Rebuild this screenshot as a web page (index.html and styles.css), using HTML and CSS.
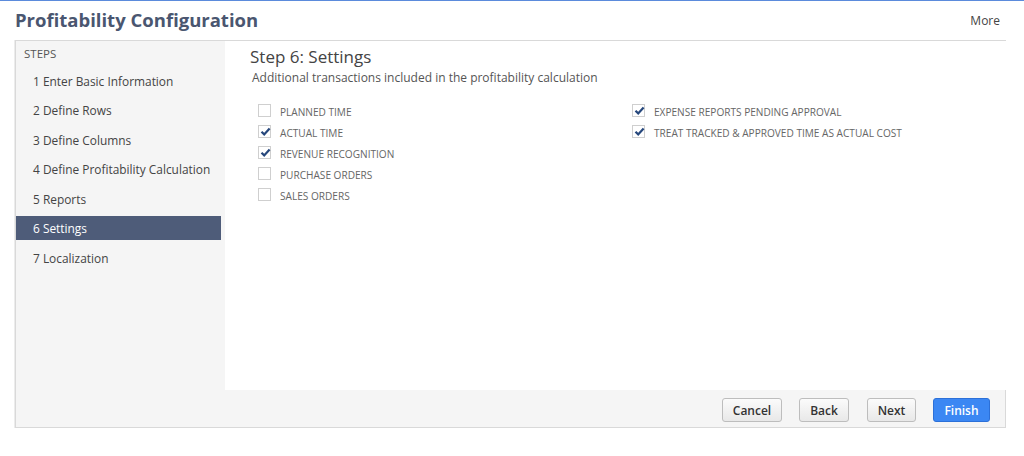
FILE: index.html
```html
<!DOCTYPE html>
<html lang="en">
<head>
  <meta charset="UTF-8" />
  <meta name="viewport" content="width=device-width, initial-scale=1.0" />
  <title>Profitability Configuration</title>
  <link rel="stylesheet" href="styles.css">
</head>
<body>
  <header class="page-header">
    <h1 class="page-title">Profitability Configuration</h1>
    <a href="#" class="more-link">More</a>
  </header>

  <div class="wizard">
    <div class="wizard-body">
      <nav class="steps">
        <div class="steps-label">STEPS</div>
        <a href="#" class="step">1 Enter Basic Information</a>
        <a href="#" class="step">2 Define Rows</a>
        <a href="#" class="step">3 Define Columns</a>
        <a href="#" class="step">4 Define Profitability Calculation</a>
        <a href="#" class="step">5 Reports</a>
        <a href="#" class="step active">6 Settings</a>
        <a href="#" class="step">7 Localization</a>
      </nav>

      <section class="content">
        <h2 class="content-title">Step 6: Settings</h2>
        <p class="content-sub">Additional transactions included in the profitability calculation</p>

        <div class="options">
          <div class="option-col">
            <label class="option"><span class="box"></span>PLANNED TIME</label>
            <label class="option"><span class="box checked"><svg viewBox="0 0 13 13"><path d="M2.5 6.8 L5.2 9.4 L10.6 3.4" /></svg></span>ACTUAL TIME</label>
            <label class="option"><span class="box checked"><svg viewBox="0 0 13 13"><path d="M2.5 6.8 L5.2 9.4 L10.6 3.4" /></svg></span>REVENUE RECOGNITION</label>
            <label class="option"><span class="box"></span>PURCHASE ORDERS</label>
            <label class="option"><span class="box"></span>SALES ORDERS</label>
          </div>
          <div class="option-col">
            <label class="option"><span class="box checked"><svg viewBox="0 0 13 13"><path d="M2.5 6.8 L5.2 9.4 L10.6 3.4" /></svg></span>EXPENSE REPORTS PENDING APPROVAL</label>
            <label class="option"><span class="box checked"><svg viewBox="0 0 13 13"><path d="M2.5 6.8 L5.2 9.4 L10.6 3.4" /></svg></span>TREAT TRACKED &amp; APPROVED TIME AS ACTUAL COST</label>
          </div>
        </div>
      </section>
    </div>

    <footer class="wizard-footer">
      <button class="btn btn-cancel">Cancel</button>
      <button class="btn btn-back">Back</button>
      <button class="btn btn-next">Next</button>
      <button class="btn btn-primary">Finish</button>
    </footer>
  </div>
</body>
</html>
```

FILE: styles.css
```css
body {
  font-family: "Open Sans", "Liberation Sans", sans-serif;
  margin: 0;
  padding: 0;
  background-color: #fff;
  border-top: 1px solid #5b8bdc;
  color: #444;
}
.page-header {
  display: flex;
  justify-content: space-between;
  align-items: center;
  height: 39px;
  padding: 0 24px 0 15px;
}
.page-title {
  margin: 0;
  font-size: 18.5px;
  font-weight: 700;
  color: #4a5670;
  margin-top: -2px;
}
.more-link {
  color: #444;
  font-size: 12px;
  text-decoration: none;
}
.wizard {
  margin-left: 15px;
  width: 989px;
  border: 1px solid #d9d9d9;
  box-shadow: 0 1px 0 #e4e4e4, -1px 0 0 #ececec;
  background-color: #f5f5f5;
}
.wizard-body {
  display: flex;
  height: 349px;
}
.steps {
  width: 209px;
  flex-shrink: 0;
  display: flex;
  flex-direction: column;
  padding-top: 4.5px;
}
.steps-label {
  font-size: 11.5px;
  line-height: 16px;
  color: #555;
  padding-left: 8px;
  margin-bottom: 7px;
}
.step {
  display: block;
  width: 188px;
  height: 24px;
  line-height: 24px;
  padding-left: 17px;
  margin-bottom: 5.6px;
  font-size: 11.9px;
  color: #444;
  text-decoration: none;
  white-space: nowrap;
}
.step.active {
  background-color: #4e5c79;
  color: #fff;
}
.content {
  flex: 1;
  background-color: #fff;
  padding: 5px 0 0 25px;
}
.content-title {
  margin: 0;
  font-size: 17px;
  font-weight: 400;
  line-height: 22px;
  color: #444;
}
.content-sub {
  margin: 1px 0 0 2px;
  font-size: 12px;
  line-height: 18px;
  color: #555;
}
.options {
  display: flex;
  margin: 14px 0 0 8px;
}
.option-col {
  width: 374px;
  display: flex;
  flex-direction: column;
}
.option {
  display: flex;
  align-items: center;
  height: 21.2px;
  font-size: 10.1px;
  color: #666;
}
.box {
  width: 13px;
  height: 13px;
  box-sizing: border-box;
  border: 1px solid #cfcfcf;
  background-color: #fff;
  margin-right: 9px;
  margin-top: -3px;
  position: relative;
}
.box svg {
  position: absolute;
  left: 0;
  top: -1px;
  width: 13px;
  height: 13px;
}
.box svg path {
  fill: none;
  stroke: #26477c;
  stroke-width: 2.2;
}
.wizard-footer {
  display: flex;
  justify-content: flex-end;
  align-items: center;
  height: 37px;
  padding-right: 15px;
}
.btn {
  font-family: "Open Sans", "Liberation Sans", sans-serif;
  font-size: 12px;
  font-weight: 600;
  height: 24px;
  padding: 0;
  border: 1px solid #bdbdbd;
  border-radius: 3px;
  background: linear-gradient(#fbfbfb, #e8e8e8);
  color: #333;
  margin-top: 3px;
}
.btn-cancel { width: 60px; }
.btn-back { width: 50px; margin-left: 17px; }
.btn-next { width: 49px; margin-left: 18px; }
.btn-primary {
  width: 57px;
  margin-left: 17px;
  background: #3b87f3;
  border-color: #2c70d8;
  color: #fff;
}
```
